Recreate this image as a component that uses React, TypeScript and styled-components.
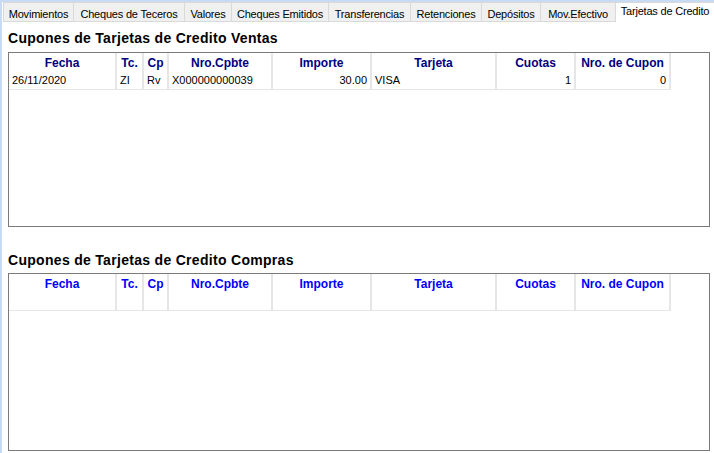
import { Fragment } from "react";
import styled, { createGlobalStyle } from "styled-components";

interface Cupon {
  fecha: string;
  tc: string;
  cp: string;
  nro: string;
  importe: string;
  tarjeta: string;
  cuotas: string;
  cupon: string;
}

const GlobalStyle = createGlobalStyle`
  body {
    margin: 0;
    background: #ffffff;
    font-family: "Liberation Sans", Arial, sans-serif;
  }
`;

const Window = styled.div`
  display: flex;
  flex-direction: column;
  width: 714px;
  height: 453px;
  box-sizing: border-box;
  overflow: hidden;
  background: #ffffff;
  border-left: 2px solid #c7dcf2;
  border-top: 2px solid #c7dcf2;
`;

const TabBar = styled.div`
  display: flex;
  height: 20px;
  padding-left: 1px;
`;

const Tab = styled.div<{ $width: number; $active?: boolean }>`
  width: ${({ $width }) => $width}px;
  flex-shrink: 0;
  box-sizing: border-box;
  border: 1px solid #d9d9d9;
  border-right: none;
  border-bottom: ${({ $active }) => ($active ? "none" : "1px solid #d9d9d9")};
  background: ${({ $active }) => ($active ? "#ffffff" : "#f0f0f0")};
  padding-top: ${({ $active }) => ($active ? 1 : 4)}px;
  font-size: 11px;
  line-height: 14px;
  letter-spacing: -0.2px;
  color: #000000;
  text-align: center;
  white-space: nowrap;
`;

const Content = styled.div`
  display: flex;
  flex-direction: column;
  padding: 0 4px 0 6px;
`;

const Title = styled.h2<{ $top: number; $bottom: number }>`
  margin: ${({ $top }) => $top}px 0 ${({ $bottom }) => $bottom}px 0;
  font-size: 14px;
  line-height: 16px;
  letter-spacing: 0.3px;
  font-weight: bold;
  color: #000000;
`;

const GridBox = styled.div<{ $height: number }>`
  height: ${({ $height }) => $height}px;
  box-sizing: border-box;
  border: 1px solid #7a7a7a;
  background: #ffffff;
`;

const Table = styled.div`
  display: grid;
  grid-template-columns: 108px 27px 25px 104px 99px 125px 79px 95px;
  width: max-content;
`;

const HeadCell = styled.div<{ $color: string }>`
  height: 19px;
  box-sizing: border-box;
  border-right: 2px solid #e6e6e6;
  padding-top: 2px;
  font-size: 12px;
  line-height: 17px;
  font-weight: bold;
  color: ${({ $color }) => $color};
  text-align: center;
  white-space: nowrap;
`;

const Cell = styled.div<{ $align?: "left" | "right" }>`
  height: 18px;
  box-sizing: border-box;
  border-right: 2px solid #e6e6e6;
  border-bottom: 1px solid #e6e6e6;
  padding: 0 3px;
  font-size: 11px;
  line-height: 17px;
  color: #000000;
  text-align: ${({ $align }) => $align ?? "left"};
  white-space: nowrap;
  overflow: hidden;
`;

const columns = ["Fecha", "Tc.", "Cp", "Nro.Cpbte", "Importe", "Tarjeta", "Cuotas", "Nro. de Cupon"];

const tabs = [
  { label: "Movimientos", width: 70 },
  { label: "Cheques de Teceros", width: 111 },
  { label: "Valores", width: 47 },
  { label: "Cheques Emitidos", width: 97 },
  { label: "Transferencias", width: 82 },
  { label: "Retenciones", width: 71 },
  { label: "Depósitos", width: 59 },
  { label: "Mov.Efectivo", width: 75 },
  { label: "Tarjetas de Credito", width: 99, active: true },
];

const ventas: Cupon[] = [
  {
    fecha: "26/11/2020",
    tc: "ZI",
    cp: "Rv",
    nro: "X000000000039",
    importe: "30.00",
    tarjeta: "VISA",
    cuotas: "1",
    cupon: "0",
  },
];

const emptyRow: Cupon = {
  fecha: "",
  tc: "",
  cp: "",
  nro: "",
  importe: "",
  tarjeta: "",
  cuotas: "",
  cupon: "",
};

const CuponGrid = ({ rows, headColor, height }: { rows: Cupon[]; headColor: string; height: number }) => (
  <GridBox $height={height}>
    <Table>
      {columns.map((c) => (
        <HeadCell key={c} $color={headColor}>
          {c}
        </HeadCell>
      ))}
      {rows.map((r, i) => (
        <Fragment key={i}>
          <Cell>{r.fecha}</Cell>
          <Cell>{r.tc}</Cell>
          <Cell>{r.cp}</Cell>
          <Cell>{r.nro}</Cell>
          <Cell $align="right">{r.importe}</Cell>
          <Cell>{r.tarjeta}</Cell>
          <Cell $align="right">{r.cuotas}</Cell>
          <Cell $align="right">{r.cupon}</Cell>
        </Fragment>
      ))}
    </Table>
  </GridBox>
);

const App = () => (
  <>
    <GlobalStyle />
    <Window>
      <TabBar>
        {tabs.map((t) => (
          <Tab key={t.label} $width={t.width} $active={t.active}>
            {t.label}
          </Tab>
        ))}
      </TabBar>
      <Content>
        <Title $top={8} $bottom={6}>Cupones de Tarjetas de Credito Ventas</Title>
        <CuponGrid rows={ventas} headColor="#000080" height={175} />
        <Title $top={25} $bottom={5}>Cupones de Tarjetas de Credito Compras</Title>
        <CuponGrid rows={[emptyRow]} headColor="#0000ff" height={178} />
      </Content>
    </Window>
  </>
);

export default App;
